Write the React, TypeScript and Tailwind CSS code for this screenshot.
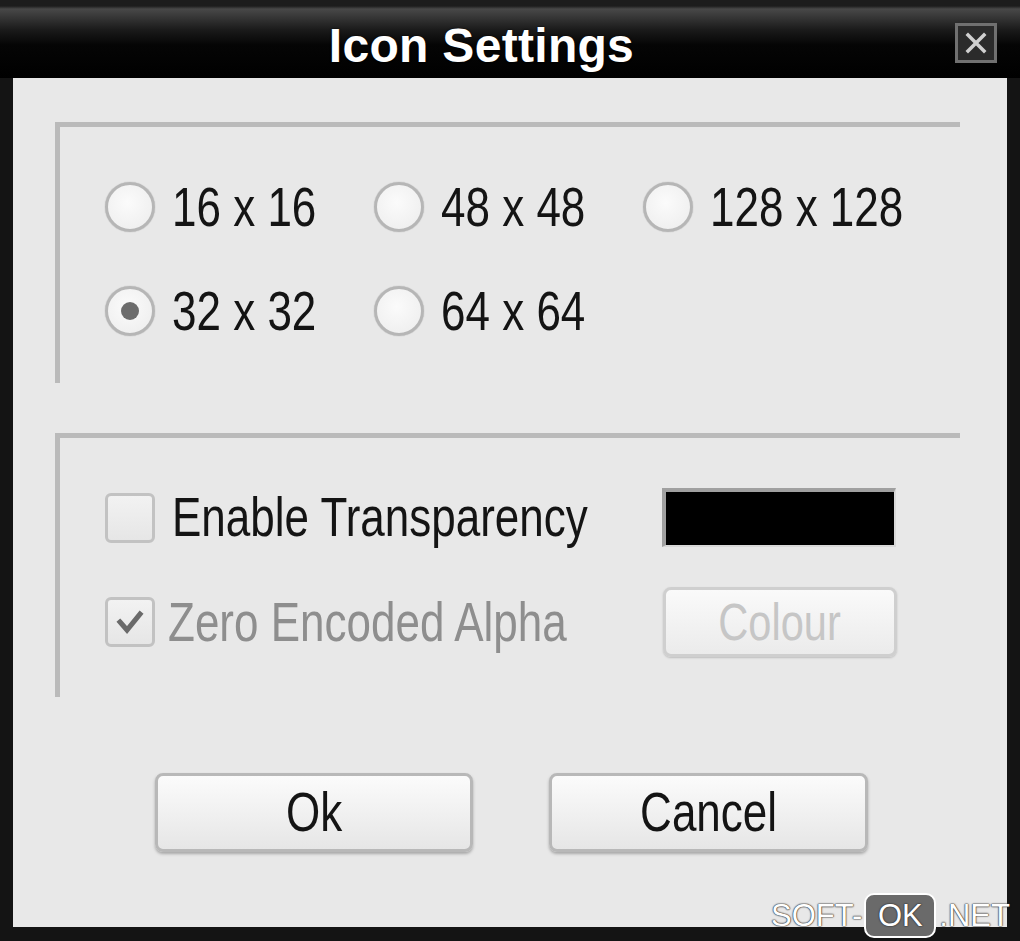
import React from "react";

const FONT = "font-['Liberation_Sans',Arial,sans-serif]";

function Radio({ checked }: { checked?: boolean }) {
  return (
    <span className="w-[50px] h-[50px] shrink-0 rounded-full border-[3px] border-[#b6b6b6] bg-[radial-gradient(circle_at_45%_40%,#fbfbfb,#ececec)] flex items-center justify-center shadow-[0_0_1px_#999]">
      {checked && <span className="w-[18px] h-[18px] rounded-full bg-[#6c6c6c]" />}
    </span>
  );
}

function Label({ text, className = "" }: { text: string; className?: string }) {
  return (
    <span
      className={`inline-block origin-left scale-x-[0.8] text-[55px] leading-none whitespace-nowrap ${className}`}
    >
      {text}
    </span>
  );
}

function RadioItem({ label, checked }: { label: string; checked?: boolean }) {
  return (
    <div className="flex items-center h-[50px]">
      <Radio checked={checked} />
      <Label text={label} className="ml-[17px] text-[#141414]" />
    </div>
  );
}

function CheckBox({ checked }: { checked?: boolean }) {
  return (
    <span className="w-[50px] h-[50px] shrink-0 rounded-[6px] border-[3px] border-[#c2c2c2] bg-[linear-gradient(to_bottom,#f2f2f2,#e6e6e6)] flex items-center justify-center">
      {checked && (
        <svg width="30" height="30" viewBox="0 0 30 30">
          <polyline
            points="5,15 12,23 25,7"
            fill="none"
            stroke="#6a6a6a"
            strokeWidth="5"
            strokeLinecap="square"
          />
        </svg>
      )}
    </span>
  );
}

function Button({ label, width }: { label: string; width: string }) {
  return (
    <div
      className={`${width} h-[79px] rounded-[8px] border-[3px] border-[#b8b8b8] bg-[linear-gradient(to_bottom,#fbfbfb,#e6e6e6)] shadow-[0_2px_3px_#a8a8a8] flex items-center justify-center`}
    >
      <span className="inline-block origin-center scale-x-[0.8] text-[55px] leading-none text-[#141414]">{label}</span>
    </div>
  );
}

export default function App() {
  return (
    <div className={`${FONT} relative w-[1020px] h-[941px] bg-[#141414] flex flex-col overflow-hidden`}>
      {/* Title bar */}
      <div className="h-[78px] shrink-0 flex items-start bg-[linear-gradient(to_bottom,#1c1c1c_0px,#1c1c1c_6px,#484848_9px,#1a1a1a_30px,#050505_45px,#000_100%)]">
        <div className="flex-1 flex justify-center pl-[8px]">
          <span className="mt-[22px] text-[48px] leading-none font-bold text-white tracking-[0.3px] [text-shadow:0_0_2px_#000]">
            Icon Settings
          </span>
        </div>
        <div className="mt-[23px] mr-[23px] w-[42px] h-[40px] border-[3px] border-[#707070] bg-[#2b2b2b] flex items-center justify-center">
          <svg width="26" height="26" viewBox="0 0 26 26">
            <path d="M5 5 L21 21 M21 5 L5 21" stroke="#d0d0d0" strokeWidth="3.5" strokeLinecap="square" />
          </svg>
        </div>
      </div>

      {/* Content */}
      <div className="mx-[13px] mb-[14px] flex-1 bg-[#e8e8e8] pt-[44px] flex flex-col">
        {/* Group 1 */}
        <div className="ml-[42px] w-[905px] h-[261px] border-t-[5px] border-l-[5px] border-[#bababa] pt-[55px] pl-[45px]">
          <div className="grid grid-cols-[269px_269px_269px] gap-y-[54px]">
            <RadioItem label="16 x 16" />
            <RadioItem label="48 x 48" />
            <RadioItem label="128 x 128" />
            <RadioItem label="32 x 32" checked />
            <RadioItem label="64 x 64" />
          </div>
        </div>

        {/* Group 2 */}
        <div className="ml-[42px] mt-[50px] w-[905px] h-[264px] border-t-[5px] border-l-[5px] border-[#bababa] pt-[50px] pl-[45px] flex flex-col">
          <div className="h-[59px] flex items-center">
            <div className="w-[557px] flex items-center">
              <CheckBox />
              <Label text="Enable Transparency" className="ml-[17px] text-[#141414]" />
            </div>
            <div className="w-[234px] h-[59px] bg-black border-t-[4px] border-l-[4px] border-b-[2px] border-r-[2px] border-t-[#a0a0a0] border-l-[#a0a0a0] border-b-[#d8d8d8] border-r-[#d8d8d8]" />
          </div>
          <div className="mt-[40px] h-[70px] flex items-center">
            <div className="w-[558px] flex items-center">
              <CheckBox checked />
              <Label text="Zero Encoded Alpha" className="ml-[13px] text-[#8e8e8e]" />
            </div>
            <div className="w-[234px] h-[70px] rounded-[8px] border-[3px] border-[#cfcfcf] bg-[linear-gradient(to_bottom,#fafafa,#ebebeb)] flex items-center justify-center shadow-[0_1px_2px_#bdbdbd]">
              <span className="inline-block origin-center scale-x-[0.8] text-[52px] leading-none text-[#c6c6c6]">
                Colour
              </span>
            </div>
          </div>
        </div>

        {/* Buttons */}
        <div className="mt-[76px] flex justify-center gap-[76px] pl-[3px]">
          <Button label="Ok" width="w-[318px]" />
          <Button label="Cancel" width="w-[319px]" />
        </div>
      </div>

      {/* Watermark */}
      <div className="absolute left-[771px] top-[893px] h-[45px] flex items-center text-[31px] leading-none text-white [text-shadow:0_0_2px_#333,0_0_1px_#333,0_0_1px_#333]">
        <span>SOFT-</span>
        <span className="ml-[2px] w-[72px] h-[45px] rounded-[10px] border-[2px] border-white bg-[#6a6a6a] flex items-center justify-center">
          OK
        </span>
        <span className="ml-[3px]">.NET</span>
      </div>
    </div>
  );
}
